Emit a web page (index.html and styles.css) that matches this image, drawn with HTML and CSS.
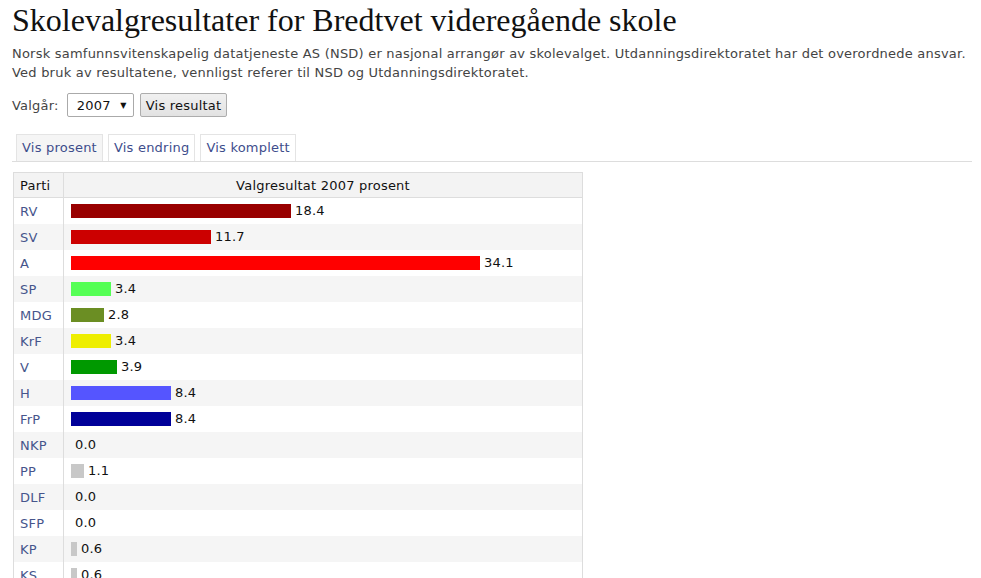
FILE: index.html
```html
<!DOCTYPE html>
<html lang="no">
<head>
<meta charset="utf-8">
<title>Skolevalgresultater for Bredtvet videregående skole</title>
<link rel="stylesheet" href="styles.css">
</head>
<body>
<div class="page">
  <h1 class="title">Skolevalgresultater for Bredtvet videregående skole</h1>
  <p class="intro">Norsk samfunnsvitenskapelig datatjeneste AS (NSD) er nasjonal arrangør av skolevalget. Utdanningsdirektoratet har det overordnede ansvar. Ved bruk av resultatene, vennligst referer til NSD og Utdanningsdirektoratet.</p>
  <form class="year-form">
    <label class="year-label">Valgår:</label>
    <div class="select"><span>2007</span><span class="caret">▼</span></div>
    <button type="button" class="btn">Vis resultat</button>
  </form>
  <div class="tabs">
    <a class="tab active">Vis prosent</a>
    <a class="tab">Vis endring</a>
    <a class="tab">Vis komplett</a>
  </div>
  <table class="results">
    <thead>
      <tr><th class="c-party">Parti</th><th class="c-bar">Valgresultat 2007 prosent</th></tr>
    </thead>
    <tbody>
      <tr><td class="c-party"><a>RV</a></td><td class="c-bar"><span class="bar" style="width:220px;background:#990000"></span>18.4</td></tr>
      <tr><td class="c-party"><a>SV</a></td><td class="c-bar"><span class="bar" style="width:140px;background:#cc0000"></span>11.7</td></tr>
      <tr><td class="c-party"><a>A</a></td><td class="c-bar"><span class="bar" style="width:409px;background:#ff0000"></span>34.1</td></tr>
      <tr><td class="c-party"><a>SP</a></td><td class="c-bar"><span class="bar" style="width:40px;background:#55ff55"></span>3.4</td></tr>
      <tr><td class="c-party"><a>MDG</a></td><td class="c-bar"><span class="bar" style="width:33px;background:#6b8e23"></span>2.8</td></tr>
      <tr><td class="c-party"><a>KrF</a></td><td class="c-bar"><span class="bar" style="width:40px;background:#eeee00"></span>3.4</td></tr>
      <tr><td class="c-party"><a>V</a></td><td class="c-bar"><span class="bar" style="width:46px;background:#009900"></span>3.9</td></tr>
      <tr><td class="c-party"><a>H</a></td><td class="c-bar"><span class="bar" style="width:100px;background:#5555ff"></span>8.4</td></tr>
      <tr><td class="c-party"><a>FrP</a></td><td class="c-bar"><span class="bar" style="width:100px;background:#000099"></span>8.4</td></tr>
      <tr><td class="c-party"><a>NKP</a></td><td class="c-bar"><span class="bar" style="width:0px;background:#c8c8c8"></span>0.0</td></tr>
      <tr><td class="c-party"><a>PP</a></td><td class="c-bar"><span class="bar" style="width:13px;background:#c8c8c8"></span>1.1</td></tr>
      <tr><td class="c-party"><a>DLF</a></td><td class="c-bar"><span class="bar" style="width:0px;background:#c8c8c8"></span>0.0</td></tr>
      <tr><td class="c-party"><a>SFP</a></td><td class="c-bar"><span class="bar" style="width:0px;background:#c8c8c8"></span>0.0</td></tr>
      <tr><td class="c-party"><a>KP</a></td><td class="c-bar"><span class="bar" style="width:6px;background:#c8c8c8"></span>0.6</td></tr>
      <tr><td class="c-party"><a>KS</a></td><td class="c-bar"><span class="bar" style="width:6px;background:#c8c8c8"></span>0.6</td></tr>
    </tbody>
  </table>
</div>
</body>
</html>
```

FILE: styles.css
```css
html, body {
  margin: 0;
  padding: 0;
  background: #fff;
}
body {
  font-family: "DejaVu Sans", Verdana, sans-serif;
  font-size: 13px;
  letter-spacing: 0.22px;
  color: #444;
}
.page {
  padding: 0 9px 0 12px;
}
.title {
  font-family: "Liberation Serif", Georgia, serif;
  font-weight: normal;
  font-size: 32px;
  letter-spacing: 0;
  line-height: 36px;
  color: #111;
  margin: 0;
  padding-top: 2px;
}
.intro {
  margin: 6px 0 0;
  line-height: 19px;
}
.year-form {
  display: flex;
  align-items: center;
  gap: 6px;
  margin-top: 11px;
  height: 24px;
}
.year-label {
  color: #444;
  margin-right: 2px;
}
.select {
  box-sizing: border-box;
  width: 67px;
  height: 24px;
  border: 1px solid #aaa;
  border-radius: 2px;
  background: #fff;
  color: #111;
  display: flex;
  align-items: center;
  justify-content: space-between;
  padding: 0 6px 0 9px;
}
.caret {
  font-size: 8px;
}
.btn {
  box-sizing: border-box;
  height: 24px;
  padding: 0 5px;
  font-family: inherit;
  font-size: 13px;
  letter-spacing: 0.22px;
  color: #111;
  background: linear-gradient(#f0f0f0, #e2e2e2);
  border: 1px solid #adadad;
  border-radius: 2px;
}
.tabs {
  display: flex;
  gap: 5px;
  margin-top: 17px;
  padding-left: 4px;
  border-bottom: 1px solid #ddd;
}
.tab {
  display: block;
  padding: 5px 5px 6px;
  border: 1px solid #e4e4e4;
  border-bottom: none;
  color: #3e4d8c;
  line-height: 15px;
}
.tab.active {
  background: #f5f5f5;
}
.results {
  border-collapse: collapse;
  margin-top: 10px;
  margin-left: 1px;
  width: 570px;
  border: 1px solid #ddd;
}
.results th {
  background: #f3f3f3;
  font-weight: normal;
  color: #111;
  height: 24px;
  padding: 0 6px;
  border-bottom: 1px solid #ddd;
}
.results th.c-party {
  text-align: left;
}
.results td {
  height: 26px;
  padding: 0 6px;
  color: #111;
}
.results .c-party {
  width: 37px;
  border-right: 1px solid #ddd;
}
.results td.c-party a {
  color: #46558c;
}
.results td.c-bar {
  padding-left: 7px;
}
.results tbody tr:nth-child(even) {
  background: #f5f5f5;
}
.bar {
  display: inline-block;
  vertical-align: middle;
  height: 14px;
  margin-right: 4px;
  position: relative;
  top: -1px;
}
```
